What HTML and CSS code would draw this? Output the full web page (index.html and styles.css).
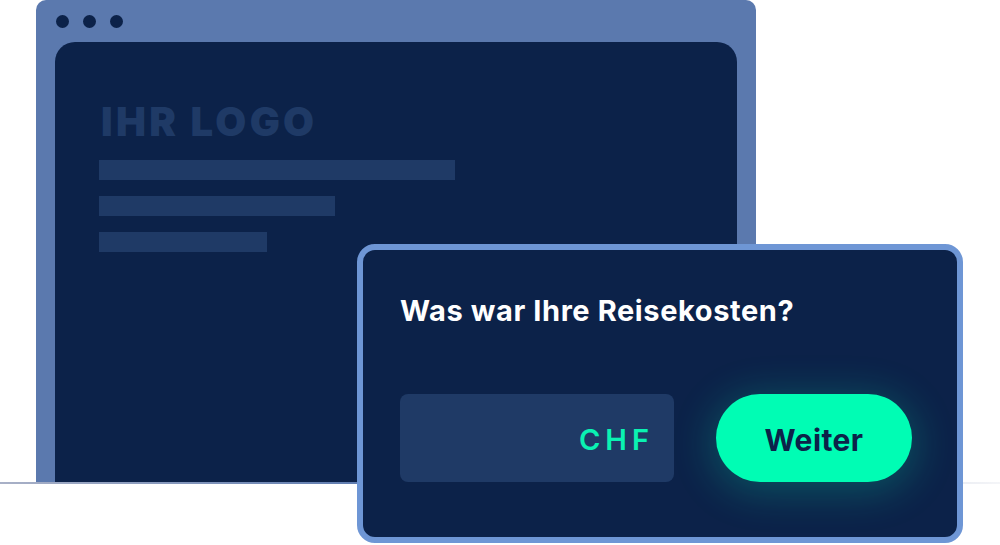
FILE: index.html
```html
<!DOCTYPE html>
<html lang="de">
<head>
<meta charset="utf-8">
<title>Reisekosten</title>
<link rel="stylesheet" href="styles.css">
</head>
<body>
<div class="scene">
  <div class="browser">
    <div class="dots"><span></span><span></span><span></span></div>
    <div class="page">
      <div class="logo">IHR LOGO</div>
      <div class="bars">
        <div class="bar bar-1"></div>
        <div class="bar bar-2"></div>
        <div class="bar bar-3"></div>
      </div>
    </div>
  </div>
  <div class="baseline"></div>
  <div class="card">
    <h1 class="question">Was war Ihre Reisekosten?</h1>
    <div class="row">
      <div class="amount"><span class="currency">CHF</span></div>
      <button class="next">Weiter</button>
    </div>
  </div>
</div>
</body>
</html>
```

FILE: styles.css
```css
* { box-sizing: border-box; }
html, body { margin: 0; padding: 0; background: #ffffff; }
body { font-family: "Inter", "Lato", sans-serif; overflow: hidden; }

.scene {
  position: relative;
  width: 1000px;
  height: 545px;
}

.browser {
  margin-left: 36px;
  width: 720px;
  height: 482px;
  background: #5b79ae;
  border-radius: 10px 10px 0 0;
  padding: 15px 19px 0 19px;
  display: flex;
  flex-direction: column;
}

.dots {
  display: flex;
  gap: 14px;
  padding-left: 1px;
  height: 27px;
}
.dots span {
  width: 13px;
  height: 13px;
  border-radius: 50%;
  background: #0c2249;
}

.page {
  flex: 1;
  background: #0c2249;
  border-radius: 20px 20px 0 0;
  padding: 60px 44px 0 44px;
}

.logo {
  font-family: "Inter", "Lato", sans-serif;
  font-weight: 900;
  font-size: 40px;
  line-height: 40px;
  letter-spacing: 3.3px;
  color: #1f3a66;
  padding-left: 2px;
}

.bars {
  margin-top: 18px;
  display: flex;
  flex-direction: column;
  gap: 16px;
}
.bar { height: 20px; background: #1f3a66; }
.bar-1 { width: 356px; }
.bar-2 { width: 236px; }
.bar-3 { width: 168px; }

.baseline {
  height: 2px;
  width: 1000px;
  background: linear-gradient(90deg, #a9b1c7 0%, #5f7cb0 36%, #c9d0e0 80%, #f4f5f8 100%);
}

.card {
  position: absolute;
  left: 357px;
  top: 244px;
  width: 606px;
  height: 299px;
  border: 6px solid #6e96d5;
  border-radius: 18px;
  background: #0c2249;
  padding: 43px 0 0 37px;
}

.question {
  margin: 0;
  font-family: "Inter", "Lato", sans-serif;
  font-weight: 700;
  font-size: 29px;
  line-height: 36px;
  letter-spacing: 0.6px;
  color: #ffffff;
}

.row {
  margin-top: 65px;
  display: flex;
  gap: 42px;
}

.amount {
  width: 274px;
  height: 88px;
  background: #1f3a66;
  border-radius: 8px;
  display: flex;
  align-items: center;
  justify-content: flex-end;
  padding: 2px 20px 0 0;
}
.currency {
  font-family: "Inter", "Lato", sans-serif;
  font-weight: 600;
  font-size: 29px;
  letter-spacing: 5px;
  color: #0af2b2;
}

.next {
  width: 196px;
  height: 88px;
  border: none;
  border-radius: 44px;
  background: #00fdb4;
  color: #0c2249;
  font-family: "Inter", "Lato", sans-serif;
  font-weight: 700;
  font-size: 30px;
  letter-spacing: 0.4px;
  box-shadow: 0 6px 40px 4px rgba(0, 255, 180, 0.22);
  padding: 3px 0 0 0;
}
```
